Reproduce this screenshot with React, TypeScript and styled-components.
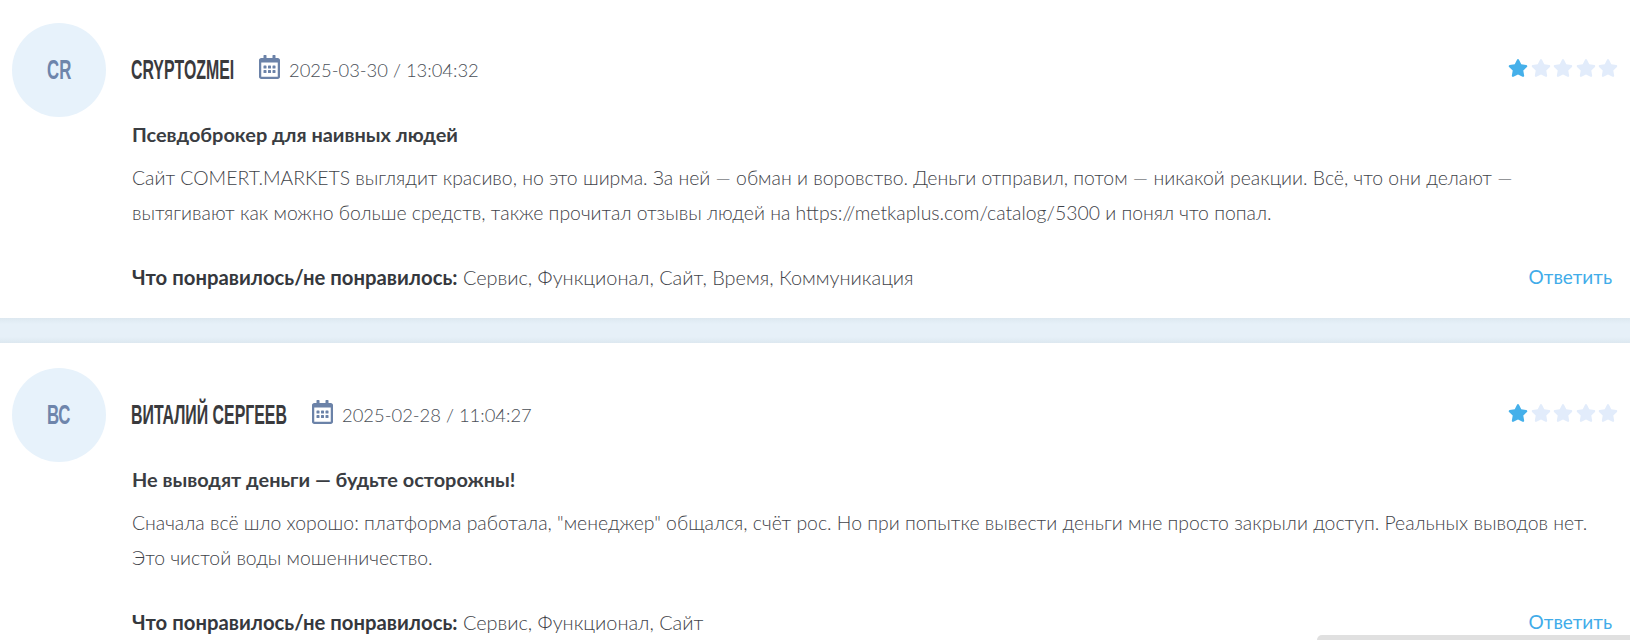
import React from "react";
import styled, { createGlobalStyle } from "styled-components";
import { FaRegCalendarAlt, FaStar } from "react-icons/fa";

const GlobalStyle = createGlobalStyle`
  html, body {
    margin: 0;
    padding: 0;
    height: 640px;
    overflow: hidden;
    background: #fff;
    font-family: "Lato", "Noto Sans", sans-serif;
  }
  * {
    box-sizing: border-box;
  }
`;

const Page = styled.div`
  position: relative;
  height: 640px;
  overflow: hidden;
`;

const List = styled.div`
  margin-top: -2px;
`;

const Card = styled.article`
  display: flex;
  gap: 26px;
  height: 320px;
  padding: 25px 12px 0;
  background: #fff;
`;

const Divider = styled.div`
  height: 25px;
  background: linear-gradient(#dde8f0 0, #e6f0f8 6px, #e6f0f8 19px, #dde8f0 100%);
`;

const Avatar = styled.div`
  flex: none;
  display: flex;
  align-items: center;
  justify-content: center;
  width: 94px;
  height: 94px;
  border-radius: 50%;
  background: #e7f2fb;
`;

const Initials = styled.span`
  display: inline-block;
  transform: scaleX(0.6);
  font-family: "Liberation Sans", sans-serif;
  font-weight: 700;
  font-size: 28px;
  color: #6e85ab;
`;

const Body = styled.div`
  flex: 1;
  min-width: 0;
`;

const Header = styled.header`
  display: flex;
  align-items: center;
  height: 94px;
`;

const NameBox = styled.div<{ $width: number }>`
  flex: none;
  width: ${(p) => p.$width}px;
  margin-left: -1px;
  margin-right: 25px;
  white-space: nowrap;
`;

const Name = styled.span`
  display: inline-block;
  transform: scaleX(0.567);
  transform-origin: left center;
  font-family: "Liberation Sans", sans-serif;
  font-weight: 700;
  font-size: 28px;
  color: #3a3a3d;
  text-transform: uppercase;
`;

const DateText = styled.span`
  display: flex;
  align-items: center;
  gap: 9px;
  font-size: 18.4px;
  font-weight: 300;
  color: #4a4f57;
  svg {
    color: #6b82a8;
    width: 21px;
    height: 24px;
    margin-top: -6px;
  }
`;

const Stars = styled.div`
  display: flex;
  gap: 2.5px;
  margin-left: auto;
  margin-top: -4px;
`;

const StarIcon = styled(FaStar)<{ $on: boolean }>`
  width: 20px;
  height: 20px;
  color: ${(p) => (p.$on ? "#45b0ea" : "#e2ecfb")};
`;

const Title = styled.h3`
  margin: 5px 0 0;
  font-size: 19.9px;
  line-height: 24px;
  font-weight: 700;
  color: #3a3d42;
`;

const Text = styled.p`
  margin: 14px 0 0;
  font-size: 19.4px;
  line-height: 35px;
  font-weight: 300;
  color: #3f4349;
`;

const Footer = styled.footer`
  display: flex;
  justify-content: space-between;
  align-items: center;
  margin-top: 35px;
  font-size: 19.9px;
  line-height: 24px;
  font-weight: 300;
  color: #3f4349;
`;

const Label = styled.b`
  font-size: 20.3px;
  font-weight: 700;
  color: #35383d;
`;

const Reply = styled.a`
  margin-right: 6px;
  font-size: 19px;
  font-weight: 400;
  color: #41ace9;
`;

const ScrollThumb = styled.div`
  position: absolute;
  left: 1317px;
  right: 0;
  bottom: -6px;
  height: 11px;
  border-radius: 5px 0 0 0;
  background: #e0e0e0;
`;

type Review = {
  initials: string;
  name: string;
  nameWidth: number;
  date: string;
  title: string;
  text: string;
  likes: string;
};

const reviews: Review[] = [
  {
    initials: "CR",
    name: "Cryptozmei",
    nameWidth: 103,
    date: "2025-03-30 / 13:04:32",
    title: "Псевдоброкер для наивных людей",
    text: "Сайт COMERT.MARKETS выглядит красиво, но это ширма. За ней — обман и воровство. Деньги отправил, потом — никакой реакции. Всё, что они делают — вытягивают как можно больше средств, также прочитал отзывы людей на https://metkaplus.com/catalog/5300 и понял что попал.",
    likes: "Сервис, Функционал, Сайт, Время, Коммуникация",
  },
  {
    initials: "ВС",
    name: "Виталий Сергеев",
    nameWidth: 156,
    date: "2025-02-28 / 11:04:27",
    title: "Не выводят деньги — будьте осторожны!",
    text: 'Сначала всё шло хорошо: платформа работала, "менеджер" общался, счёт рос. Но при попытке вывести деньги мне просто закрыли доступ. Реальных выводов нет. Это чистой воды мошенничество.',
    likes: "Сервис, Функционал, Сайт",
  },
];

const App: React.FC = () => {
  return (
    <Page>
      <GlobalStyle />
      <List>
        {reviews.map((r, i) => (
          <React.Fragment key={r.name}>
            {i > 0 && <Divider />}
            <Card>
              <Avatar>
                <Initials>{r.initials}</Initials>
              </Avatar>
              <Body>
                <Header>
                  <NameBox $width={r.nameWidth}>
                    <Name>{r.name}</Name>
                  </NameBox>
                  <DateText>
                    <FaRegCalendarAlt />
                    {r.date}
                  </DateText>
                  <Stars>
                    {[0, 1, 2, 3, 4].map((n) => (
                      <StarIcon key={n} $on={n === 0} />
                    ))}
                  </Stars>
                </Header>
                <Title>{r.title}</Title>
                <Text>{r.text}</Text>
                <Footer>
                  <span>
                    <Label>Что понравилось/не понравилось:</Label> {r.likes}
                  </span>
                  <Reply>Ответить</Reply>
                </Footer>
              </Body>
            </Card>
          </React.Fragment>
        ))}
      </List>
      <ScrollThumb />
    </Page>
  );
};

export default App;
